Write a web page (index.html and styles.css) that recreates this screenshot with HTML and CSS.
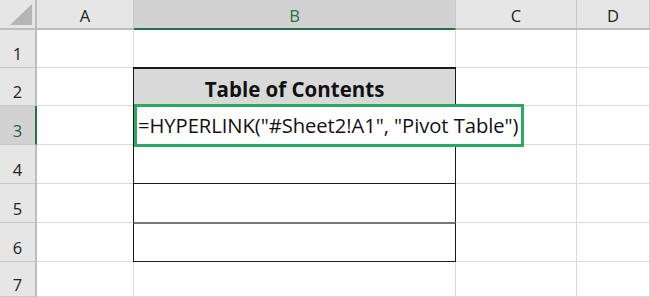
FILE: index.html
```html
<!DOCTYPE html>
<html>
<head>
<meta charset="utf-8">
<link rel="stylesheet" href="styles.css">
</head>
<body>
<div class="sheet">
  <div class="hd corner"><svg class="tri" width="22" height="21" viewBox="0 0 22 21"><polygon points="22,0 22,21 0,21" fill="#b5b5b5"/></svg></div>
  <div class="hd col">A</div>
  <div class="hd col sel">B</div>
  <div class="hd col">C</div>
  <div class="hd col last">D</div>

  <div class="hd row">1</div>
  <div class="cell"></div>
  <div class="cell"></div>
  <div class="cell"></div>
  <div class="cell"></div>

  <div class="hd row">2</div>
  <div class="cell"></div>
  <div class="cell toc title">Table of Contents</div>
  <div class="cell after"></div>
  <div class="cell"></div>

  <div class="hd row selrow">3</div>
  <div class="cell"></div>
  <div class="cell toc formula">=HYPERLINK("#Sheet2!A1", "Pivot Table")</div>
  <div class="cell noleft"></div>
  <div class="cell"></div>

  <div class="hd row">4</div>
  <div class="cell"></div>
  <div class="cell toc"></div>
  <div class="cell after"></div>
  <div class="cell"></div>

  <div class="hd row">5</div>
  <div class="cell"></div>
  <div class="cell toc"></div>
  <div class="cell after"></div>
  <div class="cell"></div>

  <div class="hd row">6</div>
  <div class="cell"></div>
  <div class="cell toc soft"></div>
  <div class="cell after"></div>
  <div class="cell"></div>

  <div class="hd row">7</div>
  <div class="cell"></div>
  <div class="cell below"></div>
  <div class="cell"></div>
  <div class="cell"></div>

  <div class="highlight"></div>
</div>
</body>
</html>
```

FILE: styles.css
```css
* { box-sizing: border-box; }
html, body { margin: 0; padding: 0; background: #fff; overflow: hidden; }
.sheet {
  position: relative;
  display: grid;
  grid-template-columns: 37px 97px 322px 121px 73px;
  grid-template-rows: 30px 38px 38px 39px 39px 39px 39px 35px;
  width: 650px;
  height: 297px;
  font-family: "Open Sans", "Noto Sans", sans-serif;
}
.hd {
  background: #e6e6e6;
  color: #222;
  font-size: 16.5px;
  display: flex;
  align-items: center;
  justify-content: center;
  border-right: 1px solid #c8c8c8;
  border-bottom: 1px solid #c8c8c8;
}
.corner {
  position: relative;
  border-right: 2px solid #bdbdbd;
  border-bottom: 2px solid #bdbdbd;
}
.corner .tri { position: absolute; right: 3px; bottom: 3px; }
.col { padding-top: 2px; border-bottom: 2px solid #bdbdbd; }
.col.sel {
  background: #d2d2d2;
  color: #217346;
  border-bottom: 2px solid #217346;
}
.row {
  border-right: 2px solid #bdbdbd;
  padding-top: 10px;
}
.row.selrow {
  background: #d2d2d2;
  color: #2b5d44;
  border-right: 2px solid #217346;
}
.cell {
  border-right: 1px solid #dadada;
  border-bottom: 1px solid #dadada;
  background: #fff;
}
.toc {
  border-left: 1px solid #1a1a1a;
  border-right: 1px solid #1a1a1a;
  border-bottom: 1px solid #1a1a1a;
  margin-left: -1px;
}
.title {
  border-top: 2px solid #1a1a1a;
  margin-top: -1px;
  background: #d9d9d9;
  font-weight: 700;
  font-size: 20.5px;
  color: #111;
  display: flex;
  align-items: center;
  justify-content: center;
  padding-top: 4px;
}
.formula {
  position: relative;
  z-index: 1;
  border-right: none;
  background: transparent;
  white-space: nowrap;
  font-family: "Open Sans", "Noto Sans", sans-serif;
  font-size: 20.2px;
  letter-spacing: -0.05px;
  color: #111;
  display: flex;
  align-items: center;
  padding-left: 4px;
  padding-top: 0;
}
.soft { border-top: 2px solid #777; margin-top: -1px; }
.noleft { border-right: 1px solid #dadada; }
.highlight {
  position: absolute;
  left: 134px;
  top: 104px;
  width: 390px;
  height: 43px;
  border: 3px solid #2aaa60;
  z-index: 2;
}
```
